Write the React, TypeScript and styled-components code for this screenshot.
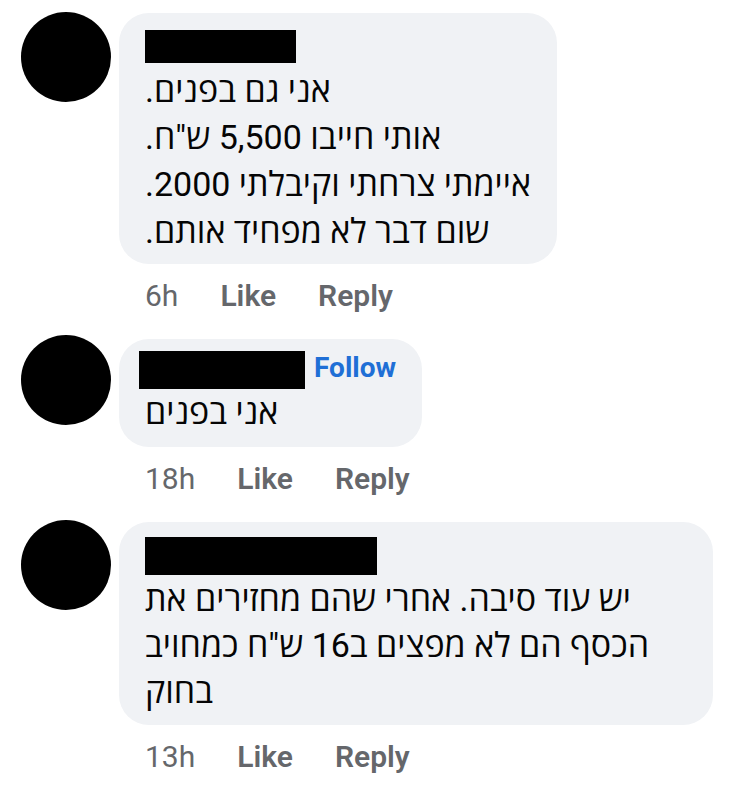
import React from "react";
import styled, { createGlobalStyle } from "styled-components";

const Global = createGlobalStyle`
  html, body { margin: 0; padding: 0; background: #ffffff; }
  body { font-family: Roboto, "Open Sans", "DejaVu Sans", "Liberation Sans", sans-serif; }
`;

const Page = styled.div`
  display: flex;
  flex-direction: column;
  gap: 25px;
  padding: 13px 0 0 21px;
`;

const Comment = styled.div`
  display: flex;
  align-items: flex-start;
  gap: 8px;
`;

const Avatar = styled.div<{ $mt: number }>`
  flex: 0 0 90px;
  width: 90px;
  height: 90px;
  margin-top: ${(p) => p.$mt}px;
  border-radius: 50%;
  background: #000;
`;

const Body = styled.div`
  display: flex;
  flex-direction: column;
  align-items: flex-start;
`;

const Bubble = styled.div<{ $width?: number; $pb: number }>`
  box-sizing: border-box;
  ${(p) => (p.$width ? `width: ${p.$width}px;` : "")}
  background: #f0f2f5;
  border-radius: 30px;
  padding: 12px 26px ${(p) => p.$pb}px 26px;
`;

const NameRow = styled.div<{ $mt: number }>`
  display: flex;
  align-items: flex-start;
  gap: 9px;
  margin-top: ${(p) => p.$mt}px;
`;

const NameBar = styled.div<{ $w: number; $h: number; $shift: number }>`
  width: ${(p) => p.$w}px;
  height: ${(p) => p.$h}px;
  margin-left: ${(p) => p.$shift}px;
  background: #000;
`;

const Follow = styled.span`
  font-family: Roboto, "Liberation Sans", sans-serif;
  font-size: 28px;
  line-height: 33px;
  font-weight: 700;
  color: #1f6fd6;
`;

const Text = styled.div<{ $lh: number; $shift: number }>`
  direction: rtl;
  text-align: left;
  font-family: Roboto, "Open Sans", "DejaVu Sans", "Liberation Sans", sans-serif;
  font-size: 34px;
  line-height: ${(p) => p.$lh}px;
  margin-top: ${(p) => p.$shift}px;
  color: #050505;
  white-space: nowrap;
`;

const Line = styled.div`
  direction: rtl;
  text-align: left;
`;

const Actions = styled.div`
  display: flex;
  align-items: baseline;
  gap: 42px;
  margin-top: 14px;
  padding-left: 26px;
  font-family: Roboto, "Liberation Sans", sans-serif;
  font-size: 30px;
  line-height: 36px;
  color: #65676b;
`;

const Time = styled.span`
  font-weight: 400;
`;

const Action = styled.span`
  font-weight: 600;
`;

type C = {
  time: string;
  name: { w: number; h: number; shift: number; mt: number };
  follow?: boolean;
  lines: string[];
  width?: number;
  lh: number;
  textShift: number;
  pb: number;
  avatarMt: number;
};

const comments: C[] = [
  {
    time: "6h",
    name: { w: 151, h: 33, shift: 0, mt: 5 },
    lines: [
      "אני גם בפנים.",
      'אותי חייבו 5,500 ש"ח.',
      "איימתי צרחתי וקיבלתי 2000.",
      "שום דבר לא מפחיד אותם.",
    ],
    lh: 47,
    textShift: 4,
    pb: 9,
    avatarMt: -1,
  },
  {
    time: "18h",
    name: { w: 166, h: 38, shift: -6, mt: 0 },
    follow: true,
    lines: ["אני בפנים"],
    lh: 46,
    textShift: 0,
    pb: 12,
    avatarMt: -4,
  },
  {
    time: "13h",
    name: { w: 232, h: 38, shift: 0, mt: 3 },
    lines: [
      "יש עוד סיבה. אחרי שהם מחזירים את",
      'הכסף הם לא מפצים ב16 ש"ח כמחויב',
      "בחוק",
    ],
    width: 594,
    lh: 46,
    textShift: 1,
    pb: 11,
    avatarMt: -2,
  },
];

export default function App() {
  return (
    <>
      <Global />
      <Page>
        {comments.map((c, i) => (
          <Comment key={i}>
            <Avatar $mt={c.avatarMt} />
            <Body>
              <Bubble $width={c.width} $pb={c.pb}>
                <NameRow $mt={c.name.mt}>
                  <NameBar $w={c.name.w} $h={c.name.h} $shift={c.name.shift} />
                  {c.follow && <Follow>Follow</Follow>}
                </NameRow>
                <Text $lh={c.lh} $shift={c.textShift} dir="rtl">
                  {c.lines.map((l, j) => (
                    <Line key={j}>{l}</Line>
                  ))}
                </Text>
              </Bubble>
              <Actions>
                <Time>{c.time}</Time>
                <Action>Like</Action>
                <Action>Reply</Action>
              </Actions>
            </Body>
          </Comment>
        ))}
      </Page>
    </>
  );
}
